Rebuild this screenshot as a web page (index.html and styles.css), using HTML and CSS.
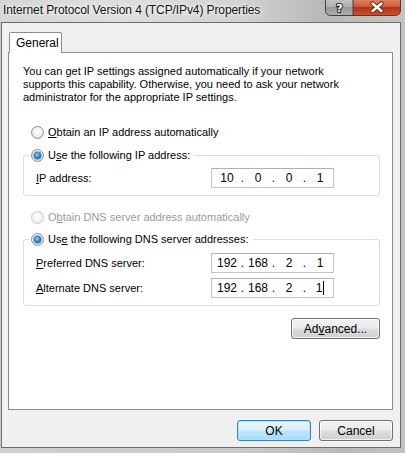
FILE: index.html
```html
<!DOCTYPE html>
<html>
<head>
<meta charset="utf-8">
<link rel="stylesheet" href="styles.css">
</head>
<body>
<div class="frame">
  <div class="titlebar">
    <div class="title">Internet Protocol Version 4 (TCP/IPv4) Properties</div>
    <svg class="caption-buttons" width="76" height="16" viewBox="0 0 76 16">
      <defs>
        <linearGradient id="gh" x1="0" y1="0" x2="0" y2="1">
          <stop offset="0" stop-color="#c8c8c8"/>
          <stop offset="0.5" stop-color="#aeaeae"/>
          <stop offset="0.51" stop-color="#979797"/>
          <stop offset="1" stop-color="#b0b0b0"/>
        </linearGradient>
        <linearGradient id="gc" x1="0" y1="0" x2="0" y2="1">
          <stop offset="0" stop-color="#e38a70"/>
          <stop offset="0.5" stop-color="#cf5638"/>
          <stop offset="0.51" stop-color="#b62f16"/>
          <stop offset="1" stop-color="#d0542e"/>
        </linearGradient>
        <clipPath id="cp"><path d="M0.5 -2 H75.5 V10.5 A5 5 0 0 1 70.5 15.5 H5.5 A5 5 0 0 1 0.5 10.5 Z"/></clipPath>
      </defs>
      <g clip-path="url(#cp)">
        <rect x="0" y="-2" width="28" height="18" fill="url(#gh)"/>
        <rect x="28" y="-2" width="48" height="18" fill="url(#gc)"/>
      </g>
      <path d="M0.5 -2 H75.5 V10.5 A5 5 0 0 1 70.5 15.5 H5.5 A5 5 0 0 1 0.5 10.5 Z" fill="none" stroke="#3f3f3f"/>
      <line x1="28" y1="0" x2="28" y2="15.5" stroke="#3f3f3f"/>
      <path d="M47.5 3.5 L56.5 11 M56.5 3.5 L47.5 11" stroke="#4a1f14" stroke-width="4.2" stroke-linecap="round"/>
      <path d="M47.5 3.5 L56.5 11 M56.5 3.5 L47.5 11" stroke="#ffffff" stroke-width="2.4" stroke-linecap="round"/>
      <text x="14.5" y="12" text-anchor="middle" font-family="DejaVu Sans" font-weight="bold" font-size="11" fill="#ffffff" stroke="#2a2a2a" stroke-width="2" paint-order="stroke">?</text>
    </svg>
  </div>
  <div class="client">
    <div class="tabs">
      <div class="tab">General</div>
    </div>
    <div class="panel">
      <p class="intro">You can get IP settings assigned automatically if your network supports this capability. Otherwise, you need to ask your network administrator for the appropriate IP settings.</p>

      <div class="radio-row"><span class="radio"></span><span><u>O</u>btain an IP address automatically</span></div>

      <fieldset class="group">
        <legend class="radio-row legend"><span class="radio checked"></span><span>U<u>s</u>e the following IP address:</span></legend>
        <div class="fields">
          <div class="label"><u>I</u>P address:</div>
          <div class="ip"><span class="oct">10</span><span class="dot">.</span><span class="oct">0</span><span class="dot">.</span><span class="oct">0</span><span class="dot">.</span><span class="oct">1</span></div>
        </div>
      </fieldset>

      <div class="radio-row disabled dns-auto"><span class="radio"></span><span>O<u>b</u>tain DNS server address automatically</span></div>

      <fieldset class="group group-dns">
        <legend class="radio-row legend"><span class="radio checked"></span><span>Us<u>e</u> the following DNS server addresses:</span></legend>
        <div class="fields">
          <div class="label"><u>P</u>referred DNS server:</div>
          <div class="ip"><span class="oct">192</span><span class="dot">.</span><span class="oct">168</span><span class="dot">.</span><span class="oct">2</span><span class="dot">.</span><span class="oct">1</span></div>
          <div class="label"><u>A</u>lternate DNS server:</div>
          <div class="ip"><span class="oct">192</span><span class="dot">.</span><span class="oct">168</span><span class="dot">.</span><span class="oct">2</span><span class="dot">.</span><span class="oct caret-oct">1<span class="caret"></span></span></div>
        </div>
      </fieldset>

      <div class="adv-row"><button class="btn adv">Ad<u>v</u>anced...</button></div>
    </div>
    <div class="dialog-buttons">
      <button class="btn default">OK</button>
      <button class="btn">Cancel</button>
    </div>
  </div>
</div>
</body>
</html>
```
FILE: styles.css
```css
* { box-sizing: border-box; }
html, body { margin: 0; padding: 0; }
body {
  width: 405px;
  height: 453px;
  overflow: hidden;
  font-family: "Liberation Sans", Arial, sans-serif;
  font-size: 11px;
  color: #000;
}
.frame {
  width: 405px;
  height: 453px;
  display: flex;
  flex-direction: column;
  background: linear-gradient(90deg, #cfcfcf 0%, #c9c9c9 60%, #b9b9b9 85%, #c2c2c2 100%);
}
.titlebar {
  height: 22px;
  display: flex;
  align-items: flex-start;
  background: linear-gradient(90deg, #d6d6d6 0%, #dedede 30%, #d2d2d2 60%, #b8b8b8 80%, #c4c4c4 100%);
}
.title {
  padding: 3px 0 0 3px;
  font-size: 12px;
  letter-spacing: -0.1px;
  line-height: 15px;
  color: #111;
  text-shadow: 0 0 6px #fff, 0 0 3px #fff;
}
.caption-buttons {
  display: block;
  margin-left: auto;
  margin-right: 4px;
  flex: none;
}
.client {
  width: 400px;
  height: 426px;
  margin-left: 1px;
  border: 1px solid #6b6b6b;
  background: #f0f0f0;
  padding: 9px 0 0 6px;
  display: flex;
  flex-direction: column;
}
.tabs {
  display: flex;
  padding-left: 1px;
  position: relative;
  z-index: 1;
}
.tab {
  width: 53px;
  height: 21px;
  margin-bottom: -1px;
  border: 1px solid #898c95;
  border-bottom: none;
  border-radius: 2px 2px 0 0;
  background: #fff;
  padding: 2px 0 0 6px;
  font-size: 12px;
  line-height: 16px;
}
.panel {
  width: 385px;
  height: 358px;
  border: 1px solid #898c95;
  background: #fff;
  padding: 12px 12px 0 14px;
  display: flex;
  flex-direction: column;
}
.intro {
  margin: 0;
  line-height: 13px;
  width: 335px;
}
.radio-row {
  display: flex;
  align-items: center;
  height: 18px;
  padding-left: 8px;
  line-height: 18px;
  white-space: nowrap;
}
.radio-row > span:last-child { margin-left: 4px; }
.intro + .radio-row { margin-top: 19px; }
.radio {
  width: 13px;
  height: 13px;
  border-radius: 50%;
  border: 1px solid #8d8f91;
  background: radial-gradient(circle at 50% 40%, #ffffff 0%, #f2f2f2 45%, #d4d4d4 100%);
  display: flex;
  align-items: center;
  justify-content: center;
  flex: none;
}
.radio.checked::after {
  content: "";
  width: 7px;
  height: 7px;
  border-radius: 50%;
  background: radial-gradient(circle at 45% 40%, #8fd3ff 0%, #2a8bd5 45%, #0b4f91 100%);
  box-shadow: 0 0 0 0.5px #1c4f78;
}
.disabled { color: #9a9a9a; }
.disabled .radio {
  border-color: #c6c7c8;
  background: radial-gradient(circle at 50% 40%, #fdfdfd 0%, #f4f4f4 50%, #e6e6e6 100%);
}
.group {
  margin: 5px 0 0 0;
  width: 357px;
  border: 1px solid #d5dfe5;
  border-radius: 3px;
  padding: 4px 0 7px 6px;
  min-width: 0;
}
.legend {
  padding: 0 4px 0 1px;
}
.fields {
  display: grid;
  grid-template-columns: 175px 123px;
  row-gap: 5px;
  padding-left: 6px;
  align-items: center;
}
.label { line-height: 20px; white-space: nowrap; }
.ip {
  height: 20px;
  border: 1px solid #c2c4c8;
  border-top-color: #aeb0b4;
  background: #fff;
  display: flex;
  align-items: center;
  padding-left: 2px;
  font-size: 12px;
}
.oct {
  width: 26px;
  text-align: center;
}
.dot {
  width: 5px;
  text-align: center;
}
.caret-oct { display: flex; justify-content: center; align-items: center; }
.caret {
  display: inline-block;
  width: 1px;
  height: 14px;
  margin-left: 1px;
  background: #000;
}
.dns-auto { margin-top: 12px; }
.group-dns { margin-top: 4px; padding-top: 5px; }
.adv-row {
  display: flex;
  justify-content: flex-end;
  margin-top: 12px;
  width: 357px;
}
.btn {
  font-family: "Liberation Sans", Arial, sans-serif;
  font-size: 12px;
  color: #000;
  height: 21px;
  border: 1px solid #707070;
  border-radius: 3px;
  background: linear-gradient(180deg, #f2f2f2 0%, #ebebeb 48%, #dddddd 52%, #cfcfcf 100%);
  box-shadow: inset 0 0 0 1px rgba(255,255,255,0.7);
  padding: 0;
  margin: 0;
}
.adv { width: 89px; }
.dialog-buttons {
  display: flex;
  justify-content: flex-end;
  gap: 8px;
  width: 385px;
  margin-top: 10px;
}
.dialog-buttons .btn { width: 74px; }
.btn.default {
  border-color: #3c7fb1;
  background: linear-gradient(180deg, #eaf6fd 0%, #d9f0fc 48%, #bee6fd 52%, #a7d9f5 100%);
  box-shadow: inset 0 0 0 1px #b8e1f8;
}
```
